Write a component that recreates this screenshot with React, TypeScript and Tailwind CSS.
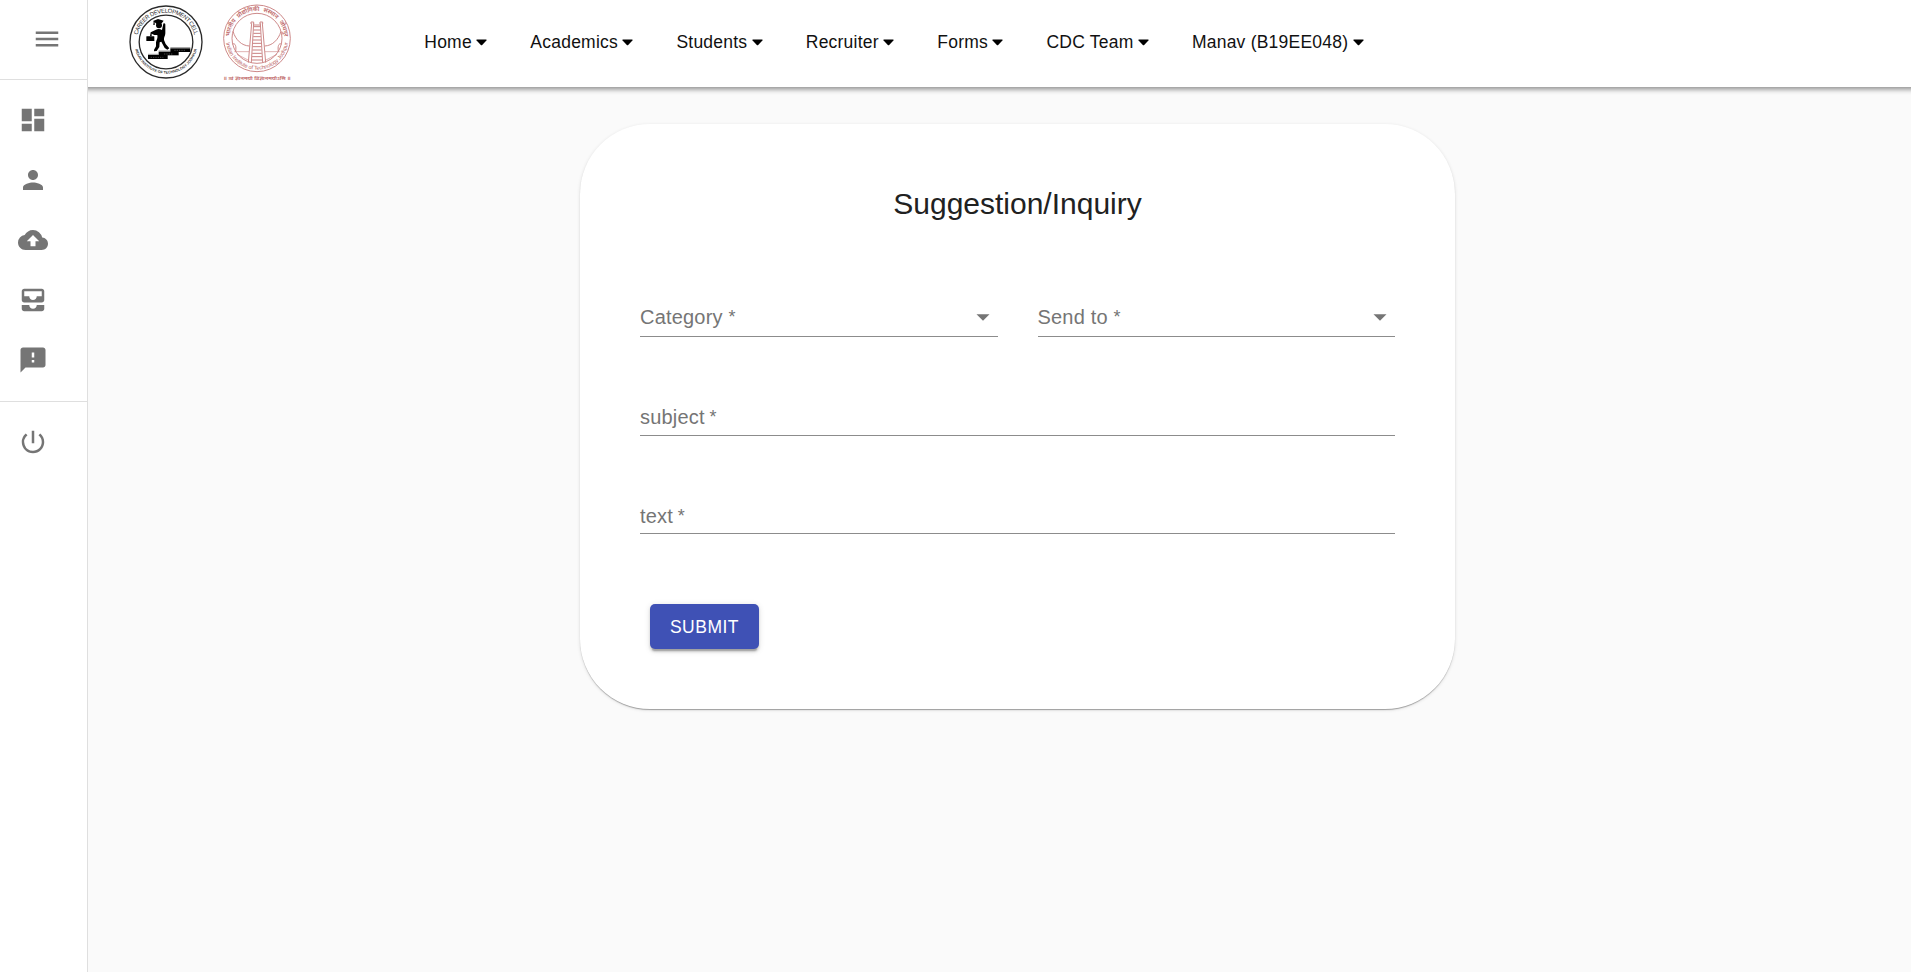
import React from "react";
import {
  MdAllInbox,
  MdBackup,
  MdDashboard,
  MdFeedback,
  MdMenu,
  MdPerson,
  MdPowerSettingsNew,
} from "react-icons/md";

const navItems = [
  "Home",
  "Academics",
  "Students",
  "Recruiter",
  "Forms",
  "CDC Team",
  "Manav (B19EE048)",
];

const sideItems = [
  { label: "Dashboard", Icon: MdDashboard },
  { label: "Profile", Icon: MdPerson },
  { label: "Upload", Icon: MdBackup },
  { label: "Inbox", Icon: MdAllInbox },
  { label: "Feedback", Icon: MdFeedback },
];

function CdcLogo() {
  return (
    <svg className="h-[74px] w-[74px] shrink-0" viewBox="27 16 222 222" fill="none">
      <defs>
        <path id="cdc-top" d="M50 127 A88 88 0 0 1 226 127" />
        <path id="cdc-bottom" d="M43 127 A95 95 0 0 0 233 127" />
      </defs>
      <circle cx="138" cy="127" r="108" stroke="#2a2a2a" strokeWidth="4" />
      <circle cx="138" cy="127" r="80.5" stroke="#2a2a2a" strokeWidth="4" />
      <text fontSize="17.5" fill="#222" fontFamily="Liberation Sans, sans-serif" textAnchor="middle">
        <textPath href="#cdc-top" startOffset="50%" textLength="234">
          CAREER DEVELOPMENT CELL
        </textPath>
      </text>
      <text fontSize="11" fontWeight="700" fill="#333" fontFamily="Liberation Sans, sans-serif" textAnchor="middle">
        <textPath href="#cdc-bottom" startOffset="50%" textLength="254">
          INDIAN INSTITUTE OF TECHNOLOGY JODHPUR
        </textPath>
      </text>
      <g fill="#000">
        <path d="M99 64 L114 58 L131 63 L128 67 L125 71 L110 73 L106 69 Z" />
        <path d="M101 65 L104 65 L104 76 L100 76 Z" />
        <ellipse cx="117" cy="77" rx="9" ry="9" />
        <path d="M108 90 C114 86 121 88 126 91 L130 72 C133 69 137 72 136 77 L136 101 C136 108 131 113 132 121 L137 133 L148 146 L142 150 L134 145 L124 126 L119 128 L118 142 L110 154 L102 155 C101 149 106 145 108 140 L108 128 C110 119 114 115 112 106 L103 106 L95 102 L95 110 L90 110 L92 98 Z" />
        <rect x="79" y="110" width="24" height="14" rx="1" />
        <rect x="84" y="166" width="59" height="12" />
        <rect x="116" y="156" width="60" height="11" />
        <rect x="151" y="146" width="60" height="11" />
      </g>
      <path d="M84 164 H116 M116 154 H150 M151 144 H211" stroke="#333" strokeWidth="1.5" />
      <path d="M92 173 H130 M132 163 H160 M163 152 H195" stroke="#666" strokeWidth="2" strokeDasharray="4 3" />
    </svg>
  );
}

function IitLogo() {
  const rungs = [80, 90, 100, 110, 120, 130, 140, 150, 160, 170, 180];
  return (
    <svg className="h-[78px] w-[70px] shrink-0" viewBox="37 12 210 234" fill="none" stroke="#c98080" strokeWidth="2.8">
      <defs>
        <path id="iit-top" d="M60 115 A82 82 0 0 1 224 115" />
        <path id="iit-bottom" d="M48 115 A94 94 0 0 0 236 115" />
      </defs>
      <circle cx="142" cy="115" r="100" />
      <circle cx="142" cy="115" r="75" />
      <g stroke="none" fill="#bd6666" fontFamily="Noto Sans Devanagari, Noto Sans, sans-serif" textAnchor="middle">
        <text fontSize="18" fontWeight="600" wordSpacing="7">
          <textPath href="#iit-top" startOffset="50%" textLength="246">
            भारतीय प्रौद्योगिकी संस्थान जोधपुर
          </textPath>
        </text>
        <text fontSize="16.5" fontFamily="Liberation Sans, sans-serif">
          <textPath href="#iit-bottom" startOffset="50%" textLength="268">
            Indian Institute of Technology Jodhpur
          </textPath>
        </text>
        <text x="142" y="240" fontSize="16" fontWeight="600" textLength="202" lengthAdjust="spacingAndGlyphs">
          ॥ त्वं ज्ञानमयो विज्ञानमयोऽसि ॥
        </text>
      </g>
      <path d="M126 70 L116 188 M132 70 L125 188 M152 70 L159 188 M158 70 L168 188" />
      <path d="M124 72 V66 H132 V72 M151 72 V66 H159 V72 M132 75 H152" />
      {rungs.map((y) => (
        <path key={y} d={`M${133 - (y - 70) / 17} ${y} H${151 + (y - 70) / 17}`} strokeWidth="3" />
      ))}
      <path d="M70 94 C78 120 96 137 119 138 M214 94 C206 120 188 137 165 138" />
      <path d="M68 132 C78 128 80 140 78 154 M216 132 C206 128 204 140 206 154" />
      <path d="M74 155 H118 M166 155 H210 M82 163 L117 181 M202 163 L167 181" strokeWidth="1.8" />
    </svg>
  );
}

function Caret() {
  return (
    <svg className="h-[7px] w-[11px]" viewBox="0 0 11 7" fill="#000">
      <path d="M1 .4 H10 Q11 .5 10.4 1.4 L6.2 5.9 Q5.5 6.5 4.8 5.9 L.6 1.4 Q0 .5 1 .4 Z" />
    </svg>
  );
}

function SelectField({ label }: { label: string }) {
  return (
    <div className="flex h-[40px] flex-1 items-start justify-between border-b border-[#8c8c8c] pr-[8px]">
      <span className="text-[20px] leading-[40px] tracking-[0.19px] text-[#757575]">
        {label} <span className="align-[1.5px] text-[18px] leading-none">*</span>
      </span>
      <svg className="mt-[17px] h-[7px] w-[14px]" viewBox="0 0 14 7" fill="#757575">
        <path d="M.5 .3 H13.5 L7 6.7 Z" />
      </svg>
    </div>
  );
}

function TextField({ label }: { label: string }) {
  return (
    <div className="flex h-full items-start text-[20px] leading-[30px] tracking-[0.19px] text-[#757575]">
      <span>
        {label} <span className="-ml-px align-[1.5px] text-[18px] leading-none">*</span>
      </span>
    </div>
  );
}

export default function App() {
  return (
    <div className="flex h-[972px] w-full overflow-hidden bg-[#fafafa] font-['Liberation_Sans',Arial,sans-serif]">
      <aside className="flex w-[88px] shrink-0 flex-col border-r border-[#dfdfdf] bg-white text-[#757575]">
        <div className="flex h-[80px] items-center border-b border-[#dfdfdf] pb-[2px] pl-[32px]">
          <button aria-label="Menu">
            <MdMenu className="size-[30px]" />
          </button>
        </div>
        <nav className="flex h-[322px] flex-col border-b border-[#dfdfdf] pt-[10px]">
          {sideItems.map(({ label, Icon }) => (
            <button key={label} aria-label={label} className="flex h-[60px] items-center pl-[18px]">
              <Icon className="size-[30px]" />
            </button>
          ))}
        </nav>
        <button aria-label="Log out" className="mt-[10px] flex h-[60px] items-center pl-[18px]">
          <MdPowerSettingsNew className="size-[30px]" />
        </button>
      </aside>

      <div className="flex min-w-0 flex-1 flex-col">
        <header className="flex h-[87px] shrink-0 items-start bg-white pl-[41px] shadow-[0_-2.5px_5px_5px_rgba(0,0,0,0.42)] [clip-path:inset(0_0_-20px_0)]">
          <div className="flex gap-[19px] pt-[5px]">
            <CdcLogo />
            <div className="-mt-px">
              <IitLogo />
            </div>
          </div>
          <nav className="ml-[132.3px] flex gap-[43px] pt-[32px]">
            {navItems.map((item) => (
              <button key={item} className="flex items-center gap-[4.5px] whitespace-nowrap text-[17.5px] leading-[21px] tracking-[0.22px] text-[#111]">
                {item}
                <Caret />
              </button>
            ))}
          </nav>
        </header>

        <main className="flex pl-[492px] pt-[37px]">
          <section className="flex h-[585px] w-[875px] flex-col rounded-[70px] bg-white px-[60px] pt-[60px] shadow-[0_1.5px_1px_-1px_rgba(0,0,0,0.2),0_1px_1px_0_rgba(0,0,0,0.14),0_1px_3.75px_0_rgba(0,0,0,0.12)]">
            <h1 className="text-center text-[30px] leading-[40px] text-[#212121]">Suggestion/Inquiry</h1>
            <div className="mt-[73px] flex gap-[40px]">
              <SelectField label="Category" />
              <SelectField label="Send to" />
            </div>
            <div className="mt-[60px] h-[39px] border-b border-[#8c8c8c] pt-[5px]">
              <TextField label="subject" />
            </div>
            <div className="mt-[59px] h-[39px] border-b border-[#8c8c8c] pt-[6px]">
              <TextField label="text" />
            </div>
            <button className="ml-[10px] mt-[70px] h-[45px] w-[109px] rounded-[5px] bg-[#3f51b5] pt-px text-[17.5px] font-medium tracking-[0.5px] text-white shadow-[0_3.75px_1.25px_-2.5px_rgba(0,0,0,0.2),0_2.5px_2.5px_0_rgba(0,0,0,0.14),0_1.25px_6.25px_0_rgba(0,0,0,0.12)]">
              SUBMIT
            </button>
          </section>
        </main>
      </div>
    </div>
  );
}
